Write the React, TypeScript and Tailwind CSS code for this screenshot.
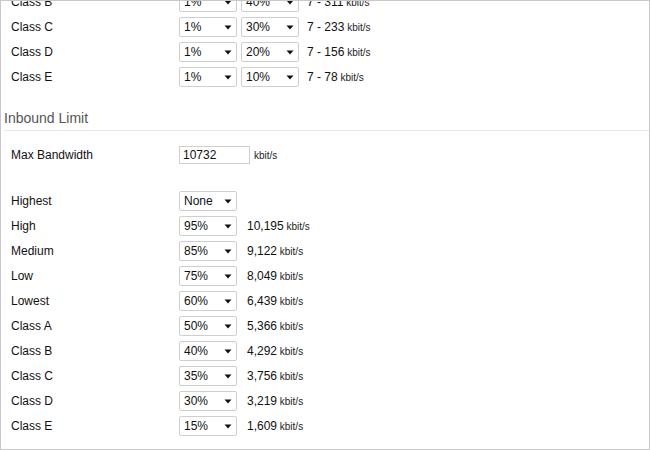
import React from "react";

const Arrow = () => (
  <svg width="8" height="5" viewBox="0 0 8 5" className="mt-[1px] shrink-0">
    <polygon points="0.5,0.5 7.5,0.5 4,4.5" fill="#111" />
  </svg>
);

const Select = ({ value }: { value: string }) => (
  <div className="flex h-[20px] w-[58px] items-center justify-between rounded-[2px] border border-[#cfcfcf] bg-white pl-[4px] pr-[4px] text-[12px] text-[#111]">
    <span>{value}</span>
    <Arrow />
  </div>
);

const Unit = () => <span className="text-[10px] text-[#222]"> kbit/s</span>;

const outbound = [
  ["Class B", "1%", "40%", "7 - 311"],
  ["Class C", "1%", "30%", "7 - 233"],
  ["Class D", "1%", "20%", "7 - 156"],
  ["Class E", "1%", "10%", "7 - 78"],
];

const inbound = [
  ["High", "95%", "10,195"],
  ["Medium", "85%", "9,122"],
  ["Low", "75%", "8,049"],
  ["Lowest", "60%", "6,439"],
  ["Class A", "50%", "5,366"],
  ["Class B", "40%", "4,292"],
  ["Class C", "35%", "3,756"],
  ["Class D", "30%", "3,219"],
  ["Class E", "15%", "1,609"],
];

export default function App() {
  return (
    <div
      className="h-[450px] w-[650px] overflow-hidden border border-[#c8c8c8] bg-white text-[12px] text-[#111]"
      style={{ fontFamily: '"Liberation Sans", Arial, sans-serif' }}
    >
      <div className="-mt-[12px]">
        {outbound.map(([label, a, b, rate]) => (
          <div key={label} className="flex h-[25px] items-center pl-[10px]">
            <div className="w-[168px]">{label}</div>
            <Select value={a} />
            <div className="ml-[4px]">
              <Select value={b} />
            </div>
            <div className="ml-[8px]">
              {rate}
              <Unit />
            </div>
          </div>
        ))}
        <div className="mt-[19px] ml-[3px] border-b border-[#e8e8e8] pb-[2px] text-[14px] leading-[20px] text-[#555]">
          Inbound Limit
        </div>
        <div className="mt-[11px] flex h-[25px] items-center pl-[10px]">
          <div className="w-[168px]">Max Bandwidth</div>
          <div className="flex h-[18px] w-[71px] items-center border border-[#cfcfcf] pl-[3px] text-[12px]">
            10732
          </div>
          <div className="ml-[4px]">
            <Unit />
          </div>
        </div>
        <div className="mt-[21px] flex h-[25px] items-center pl-[10px]">
          <div className="w-[168px]">Highest</div>
          <Select value="None" />
        </div>
        {inbound.map(([label, v, rate]) => (
          <div key={label} className="flex h-[25px] items-center pl-[10px]">
            <div className="w-[168px]">{label}</div>
            <Select value={v} />
            <div className="ml-[10px]">
              {rate}
              <Unit />
            </div>
          </div>
        ))}
      </div>
    </div>
  );
}
